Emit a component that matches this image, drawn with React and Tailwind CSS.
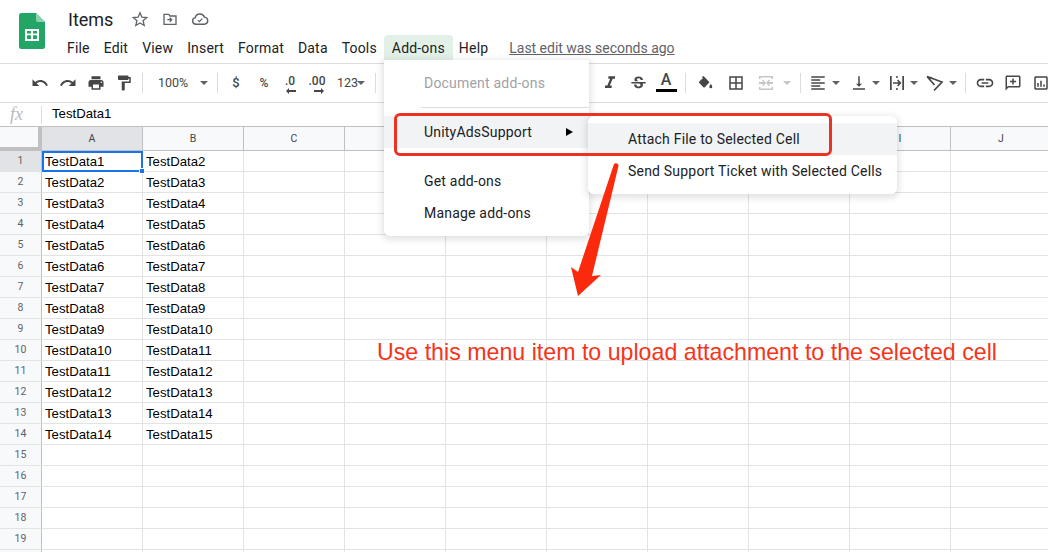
import React from "react";

const ROBOTO = "font-['Roboto',sans-serif]";
const ARIAL = "font-['Liberation_Sans',sans-serif]";

const columns = ["A", "B", "C", "D", "E", "F", "G", "H", "I", "J"];

const cells = {};
for (let i = 1; i <= 14; i++) {
  cells[i] = [`TestData${i}`, `TestData${i + 1}`];
}
const rows = Array.from({ length: 20 }, (_, i) => i + 1);

const menuItems = ["File", "Edit", "View", "Insert", "Format", "Data", "Tools"];

const Icon = ({ d, size = 18, className = "", fill = "#444746" }) => (
  <svg width={size} height={size} viewBox="0 0 24 24" className={className}>
    <path d={d} fill={fill} />
  </svg>
);

const Caret = ({ className = "", color = "border-t-[#5f6368]" }) => (
  <span className={`h-0 w-0 border-x-[4px] border-t-[4px] border-x-transparent ${color} ${className}`} />
);

const Sep = ({ className = "" }) => (
  <span className={`h-5 w-px shrink-0 bg-[#dadce0] ${className}`} />
);

const Slot = ({ className = "w-7", children }) => (
  <span className={`flex h-7 shrink-0 items-center justify-center ${className}`}>
    {children}
  </span>
);

const SheetsLogo = () => (
  <svg width="26" height="36" viewBox="0 0 26 36" className="shrink-0">
    <path d="M2.5 0H17l9 9v24.5a2.5 2.5 0 0 1-2.5 2.5h-21A2.5 2.5 0 0 1 0 33.500V2.500A2.500 2.500 0 0 1 2.500 0z" fill="#23a566" />
    <path d="M17 0l9 9h-6.500A2.500 2.500 0 0 1 17 6.500z" fill="#8ed1b1" />
    <path d="M6 16h14v12H6zm2 2v2.500h4V18zm6 0v2.500h4V18zm-6 4.200v3.800h4v-3.800zm6 0v3.800h4v-3.800z" fill="#fff" fillRule="evenodd" />
  </svg>
);

const Toolbar = () => (
  <div className="flex h-[39px] items-center overflow-hidden border-b border-[#dadce0] pl-[26px] text-[#444746]">
    <Slot><Icon d="M12.500 8c-2.650 0-5.050.99-6.900 2.600L2 7v9h9l-3.620-3.620c1.390-1.160 3.160-1.880 5.120-1.880 3.540 0 6.550 2.310 7.600 5.500l2.370-.78C21.080 11.030 17.150 8 12.500 8z" /></Slot>
    <Slot><Icon d="M18.400 10.600C16.550 8.990 14.150 8 11.500 8c-4.650 0-8.580 3.030-9.960 7.220L3.900 16c1.050-3.190 4.050-5.500 7.600-5.500 1.950 0 3.730.72 5.120 1.880L13 16h9V7l-3.600 3.600z" /></Slot>
    <Slot><Icon d="M19 8H5c-1.660 0-3 1.340-3 3v6h4v4h12v-4h4v-6c0-1.660-1.340-3-3-3zm-3 11H8v-5h8v5zm3-7c-.55 0-1-.45-1-1s.45-1 1-1 1 .45 1 1-.45 1-1 1zm-1-9H6v4h12V3z" /></Slot>
    <Slot><Icon d="M18 4V3c0-.55-.45-1-1-1H5c-.55 0-1 .45-1 1v4c0 .55.45 1 1 1h12c.55 0 1-.45 1-1V6h1v4H9v11c0 .55.45 1 1 1h2c.55 0 1-.45 1-1v-9h8V4h-3z" /></Slot>
    <Sep className="ml-1" />
    <span className={`ml-[15px] w-[42px] shrink-0 text-[12.500px] ${ROBOTO}`}>100%</span>
    <Caret className="shrink-0" />
    <Sep className="ml-[9px]" />
    <span className={`ml-1 flex w-7 shrink-0 justify-center text-[13px] font-medium ${ROBOTO}`}>$</span>
    <span className={`flex w-7 shrink-0 justify-center text-[12px] font-medium ${ROBOTO}`}>%</span>
    <span className={`relative -ml-px flex h-7 w-[26px] shrink-0 items-start justify-center pt-[3px] text-[12px] font-medium ${ROBOTO}`}>
      .0
      <svg width="10" height="6" viewBox="0 0 10 6" className="absolute bottom-[3px] left-[9px]">
        <path d="M0 3l3-3v2h7v2H3v2z" fill="#444746" />
      </svg>
    </span>
    <span className={`relative flex h-7 w-7 shrink-0 items-start justify-center pt-[3px] text-[12px] font-medium ${ROBOTO}`}>
      .00
      <svg width="10" height="6" viewBox="0 0 10 6" className="absolute bottom-[3px] left-[11px]">
        <path d="M10 3L7 0v2H0v2h7v2z" fill="#444746" />
      </svg>
    </span>
    <span className={`ml-[6px] w-[20px] shrink-0 text-[12.500px] ${ROBOTO}`}>123</span>
    <Caret className="shrink-0" />
    <Sep className="ml-[10px]" />
    {/* font controls sit behind the open menu */}
    <span className="w-[220px] shrink-0" />
    <Slot><Icon d="M10 4v3h2.210l-3.420 8H6v3h8v-3h-2.210l3.420-8H18V4z" size={20} /></Slot>
    <Slot><Icon d="M6.850 7.080C6.850 4.370 9.450 3 12.240 3c1.640 0 3 .49 3.900 1.280.77.65 1.460 1.720 1.460 3.240h-3.010c0-.31-.05-.59-.15-.85-.29-.86-1.200-1.280-2.250-1.280-1.860 0-2.340 1.020-2.340 1.700 0 .48.25.88.74 1.210.38.25.77.48 1.410.7H7.390c-.21-.34-.54-.89-.54-1.920zM21 12v-2H3v2h9.620c1.150.45 1.960.75 1.960 1.970 0 1-.81 1.670-2.280 1.670-1.540 0-2.930-.54-2.930-2.510H6.400c0 .55.08 1.130.24 1.580.81 2.290 3.290 3.300 5.670 3.300 2.270 0 5.300-.89 5.300-4.050 0-.3-.01-1.160-.48-1.960H21z" size={19} /></Slot>
    <span className="relative flex h-7 w-7 shrink-0 flex-col items-center justify-start">
      <span className={`mt-[1px] text-[16px] leading-[19px] font-medium ${ROBOTO}`}>A</span>
      <span className="h-[3px] w-[21px] bg-black" />
    </span>
    <Sep className="ml-[5px]" />
    <Slot className="ml-[5px] w-7">
      <svg width="16" height="16" viewBox="0 0 16 16">
        <path d="M6.500 1l6 6.300-4.700 4.900a1 1 0 0 1-1.400 0L2.300 8a1 1 0 0 1 0-1.400L6 3 4.800 1.900z" fill="#444746" />
        <path d="M13.800 9s1.500 1.700 1.500 2.800a1.500 1.500 0 0 1-3 0C12.300 10.700 13.800 9 13.800 9z" fill="#444746" />
      </svg>
    </Slot>
    <Slot className="ml-[3px] w-7"><Icon d="M3 3v18h18V3H3zm8 16H5v-6h6v6zm0-8H5V5h6v6zm8 8h-6v-6h6v6zm0-8h-6V5h6v6z" /></Slot>
    <Slot className="ml-[2px] w-7">
      <svg width="18" height="18" viewBox="0 0 18 18">
        <path d="M2 2h14v3h-1.500V3.500h-11V5H2zM2 13h1.500v1.500h11V13H16v3H2zM2 8h4.500L5 6.500 6 5.500 9 9l-3 3.300-1-1L6.500 10H2zM16 8h-4.500L13 6.500l-1-1L9 9l3 3.300 1-1L11.500 10H16z" fill="#c4c7c5" />
      </svg>
    </Slot>
    <Caret className="ml-[3px] shrink-0" color="border-t-[#c4c7c5]" />
    <Sep className="ml-[9px]" />
    <Slot className="ml-[5px] w-6"><Icon d="M15 15H3v2h12v-2zm0-8H3v2h12V7zM3 13h18v-2H3v2zm0 8h18v-2H3v2zM3 3v2h18V3H3z" /></Slot>
    <Caret className="ml-[2px] shrink-0" />
    <Slot className="ml-[7px] w-6"><Icon d="M16 13h-3V3h-2v10H8l4 4 4-4zM4 19v2h16v-2H4z" /></Slot>
    <Caret className="ml-[1px] shrink-0" />
    <Slot className="ml-[5px] w-6">
      <svg width="18" height="18" viewBox="0 0 18 18">
        <path d="M2 2h1.700v14H2zM14.300 2H16v14h-1.700zM5 8.200h5.600L9 6.500l1.100-1L13.500 9l-3.400 3.500-1.100-1 1.600-1.700H5zM8.200 2h1.500v2H8.200zM8.200 14h1.500v2H8.200z" fill="#444746" />
      </svg>
    </Slot>
    <Caret className="ml-[1px] shrink-0" />
    <Slot className="ml-[5px] w-6">
      <svg width="20" height="18" viewBox="0 0 20 18">
        <path d="M2 2.500L17 8 9 16.500M2 2.500L9.500 11" fill="none" stroke="#444746" strokeWidth="1.700" />
        <path d="M4.500 2.500l3 1-1.500 2z" fill="#444746" />
      </svg>
    </Slot>
    <Caret className="ml-[2px] shrink-0" />
    <Sep className="ml-2" />
    <Slot className="ml-[5px] w-7"><Icon d="M3.900 12c0-1.710 1.390-3.100 3.100-3.100h4V7H7c-2.760 0-5 2.240-5 5s2.240 5 5 5h4v-1.900H7c-1.710 0-3.100-1.390-3.100-3.100zM8 13h8v-2H8v2zm9-6h-4v1.900h4c1.710 0 3.100 1.390 3.100 3.100s-1.390 3.100-3.100 3.100h-4V17h4c2.760 0 5-2.240 5-5s-2.240-5-5-5z" size={20} /></Slot>
    <Slot><Icon d="M20 2H4c-1.100 0-2 .9-2 2v18l4-4h14c1.100 0 2-.9 2-2V4c0-1.100-.9-2-2-2zm0 14H5.200L4 17.200V4h16v12zM11 6h2v3h3v2h-3v3h-2v-3H8V9h3z" /></Slot>
    <Slot><Icon d="M19 3H5c-1.100 0-2 .9-2 2v14c0 1.100.9 2 2 2h14c1.100 0 2-.9 2-2V5c0-1.100-.9-2-2-2zm0 16H5V5h14v14zM7 12h2v5H7zm4-3h2v8h-2zm4 5h2v3h-2z" /></Slot>
  </div>
);

const Grid = () => (
  <div className={`text-[13.200px] text-black ${ARIAL}`}>
    <div className="flex h-6 border-b border-[#c0c0c0] bg-[#f8f9fa]">
      <div className="h-[23px] w-[42px] shrink-0 border-r-4 border-b-[3px] border-[#c0c0c0]" />
      {columns.map((col) => (
        <div
          key={col}
          className={`flex w-[101px] shrink-0 items-center justify-center border-r border-[#c0c0c0] text-[10.500px] text-[#444746] ${ROBOTO} ${col === "A" ? "bg-[#e1e3e6]" : ""}`}
        >
          {col}
        </div>
      ))}
    </div>
    {rows.map((row) => (
      <div key={row} className="flex h-[21px]">
        <div
          className={`flex w-[42px] shrink-0 items-center justify-center border-r border-b border-r-[#c0c0c0] border-b-[#e2e3e3] text-[10.500px] text-[#5f6368] ${ROBOTO} ${row === 1 ? "bg-[#e1e3e6]" : "bg-[#f8f9fa]"}`}
        >
          {row < 20 ? row : ""}
        </div>
        {columns.map((col, idx) => (
          <div
            key={col}
            className="flex w-[101px] shrink-0 items-center overflow-hidden border-r border-b border-[#e2e3e3] pt-px pl-[3px]"
          >
            {cells[row] && idx < 2 ? cells[row][idx] : ""}
          </div>
        ))}
      </div>
    ))}
  </div>
);

const App = () => {
  return (
    <div className={`relative h-[552px] w-[1048px] overflow-hidden bg-white ${ROBOTO}`}>
      <header className="flex h-16 border-b border-[#dadce0] pt-[13px] pl-[19px]">
        <SheetsLogo />
        <div className="ml-[23px] -mt-[7px]">
          <div className="flex h-[26px] items-center">
            <span className="text-[18px] text-[#202124]">Items</span>
            <svg width="18" height="18" viewBox="0 0 24 24" className="ml-[18px]">
              <path d="M12 3.500l2.500 6 6.500.5-5 4.300 1.600 6.300L12 17.200l-5.600 3.400L8 14.300 3 10l6.500-.5z" fill="none" stroke="#5f6368" strokeWidth="1.700" />
            </svg>
            <svg width="16" height="16" viewBox="0 0 24 24" className="ml-[13px]">
              <path d="M3 5h7l2 2.500h9V20H3z" fill="none" stroke="#5f6368" strokeWidth="2" />
              <path d="M8 13h6m-2.500-3l3 3-3 3" fill="none" stroke="#5f6368" strokeWidth="2" />
            </svg>
            <svg width="18" height="18" viewBox="0 0 24 24" className="ml-[13px]">
              <path d="M6.500 19a4.500 4.500 0 0 1-.8-8.900A6.500 6.500 0 0 1 18 9.500a4.800 4.800 0 0 1 .3 9.500z" fill="none" stroke="#5f6368" strokeWidth="1.900" />
              <path d="M9 13.500l2.200 2 3.800-4" fill="none" stroke="#5f6368" strokeWidth="1.700" />
            </svg>
          </div>
          <nav className="mt-[3px] -ml-[8px] flex h-[26px] items-center text-[14px] tracking-[0.18px] text-[#202124]">
            {menuItems.map((item) => (
              <span key={item} className="px-[7px]">{item}</span>
            ))}
            <span className="flex h-[26px] items-center rounded-t-[4px] bg-[#e3f0e8] px-[8px]">Add-ons</span>
            <span className="-ml-px px-[7px]">Help</span>
            <span className="ml-[14px] tracking-[-0.02px] text-[#5f6368] underline">Last edit was seconds ago</span>
          </nav>
        </div>
      </header>

      <Toolbar />

      <div className="flex h-6 items-center border-b border-[#c0c0c0]">
        <span className="ml-[10px] w-[31px] font-['Liberation_Serif',serif] text-[18px] text-[#b9bbbd] italic">fx</span>
        <span className="h-[18px] w-px bg-[#dadce0]" />
        <span className={`ml-[10px] pb-px text-[13.200px] text-black ${ARIAL}`}>TestData1</span>
      </div>

      <Grid />

      {/* selected cell */}
      <div className="absolute top-[151px] left-[42px] h-[21px] w-[101px] border-2 border-[#1a73e8]" />
      <div className="absolute top-[168px] left-[139px] h-[6px] w-[6px] border border-white bg-[#1a73e8]" />

      {/* open add-ons menu */}
      <div className="absolute top-[60px] left-[384px] h-[176px] w-[205px] rounded-b-[6px] bg-white pt-[7px] text-[14px] tracking-[0.2px] text-[#202124] shadow-[0_2px_6px_2px_rgba(60,64,67,0.15)]">
        <div className="flex h-8 items-center pl-[40px] text-[#a0a3a6]">Document add-ons</div>
        <div className="mt-2 ml-[37px] h-px bg-[#dadce0]" />
        <div className="mt-2 flex h-8 items-center justify-between bg-[#f1f3f4] pr-[16px] pl-[40px]">
          UnityAdsSupport
          <span className="h-0 w-0 border-y-[4px] border-l-[7px] border-y-transparent border-l-black" />
        </div>
        <div className="mt-[17px] flex h-8 items-center pl-[40px]">Get add-ons</div>
        <div className="flex h-8 items-center pl-[40px]">Manage add-ons</div>
      </div>

      {/* submenu */}
      <div className="absolute top-[116px] left-[588px] h-[78px] w-[309px] rounded-[6px] bg-white pt-[7px] text-[14px] tracking-[0.2px] text-[#202124] shadow-[0_2px_6px_2px_rgba(60,64,67,0.15)]">
        <div className="flex h-8 items-center bg-[#f1f3f4] pl-[40px]">Attach File to Selected Cell</div>
        <div className="flex h-8 items-center pl-[40px]">Send Support Ticket with Selected Cells</div>
      </div>

      {/* annotation */}
      <div className="absolute top-[113px] left-[394px] h-[43px] w-[438px] rounded-[6px] border-[3px] border-[#ea3323]" />
      <svg width="1048" height="552" className="pointer-events-none absolute top-0 left-0">
        <path d="M613.500 165.500a2.500 2.500 0 0 1 5 .5L592 276l9-1-23 21-7-29 7 5z" fill="#fb2a0c" />
      </svg>
      <div className={`absolute top-[335px] left-[377px] text-[23.200px] whitespace-nowrap text-[#f5341a] ${ARIAL}`}>
        Use this menu item to upload attachment to the selected cell
      </div>
    </div>
  );
};

export default App;
